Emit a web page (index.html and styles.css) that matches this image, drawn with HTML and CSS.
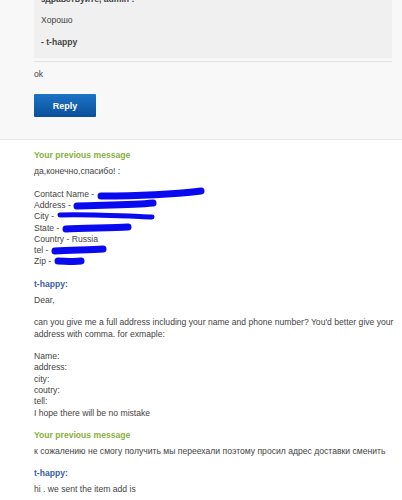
FILE: index.html
```html
<!DOCTYPE html>
<html lang="ru">
<head>
    <meta charset="UTF-8">
    <meta name="viewport" content="width=device-width, initial-scale=1.0">
    <title>Message</title>
    <link rel="stylesheet" href="styles.css">
</head>
<body>
    <section class="reply-area">
        <div class="quote">
            <p class="strong">здравствуйте, admin :</p>
            <p>Хорошо</p>
            <p class="strong">- t-happy</p>
        </div>
        <div class="quote-line"></div>
        <p class="answer">ok</p>
        <button class="reply-btn">Reply</button>
    </section>

    <section class="history">
        <div class="msg">
            <div class="label mine">Your previous message</div>
            <div class="body">
                да,конечно,спасибо! :<br><br>
                Contact Name - <svg class="redact" width="108" height="12" viewBox="0 0 108 12"><path d="M4 8 C30 8 70 7 104 3" /></svg><br>
                Address - <svg class="redact" width="84" height="12" viewBox="0 0 84 12"><path d="M4 7 C30 6 60 6 80 4" /></svg><br>
                City - <svg class="redact thin" width="100" height="12" viewBox="0 0 100 12"><path d="M4 5 C30 4 70 6 96 7" /></svg><br>
                State - <svg class="redact" width="70" height="12" viewBox="0 0 70 12"><path d="M4 7 C20 6 50 6 66 5" /></svg><br>
                Country - Russia<br>
                tel - <svg class="redact" width="56" height="12" viewBox="0 0 56 12"><path d="M4 7 C20 6 40 6 52 5" /></svg><br>
                Zip - <svg class="redact" width="31" height="12" viewBox="0 0 31 12"><path d="M4 6 C10 6 20 7 27 6" /></svg>
            </div>
        </div>

        <div class="msg">
            <div class="label seller">t-happy:</div>
            <div class="body">
                Dear,<br><br>
                can you give me a full address including your name and phone number? You'd better give your address with comma. for exmaple:<br><br>
                Name:<br>
                address:<br>
                city:<br>
                coutry:<br>
                tell:<br>
                I hope there will be no mistake
            </div>
        </div>

        <div class="msg">
            <div class="label mine">Your previous message</div>
            <div class="body">к сожалению не смогу получить мы переехали поэтому просил адрес доставки сменить</div>
        </div>

        <div class="msg">
            <div class="label seller">t-happy:</div>
            <div class="body">hi . we sent the item add is</div>
        </div>
    </section>
</body>
</html>
```

FILE: styles.css
```css
/* General */
body {
    margin: 0;
    font-family: "Liberation Sans", Arial, sans-serif;
    font-size: 8.6px;
    line-height: 11.3px;
    color: #444;
    background-color: #fff;
    overflow: hidden;
}

p {
    margin: 0;
}

.strong {
    font-weight: bold;
}

/* Top reply area */
.reply-area {
    background-color: #f8f8f8;
    padding: 0 10px 22px 34px;
    border-bottom: 1px solid #e6e6e6;
}

.quote {
    margin-top: -13px;
    padding: 6.5px 7px 9px 7px;
    background-color: #f0f0f0;
}

.quote p {
    margin-bottom: 10.7px;
}

.quote p:last-child {
    margin-bottom: 0;
}

.quote-line {
    margin-top: 3px;
    height: 1px;
    background-color: #e2e2e2;
}

.answer {
    margin-top: 7px;
}

.reply-btn {
    display: block;
    margin-top: 14px;
    width: 62px;
    height: 23px;
    padding: 0;
    border: none;
    border-radius: 1px;
    background: linear-gradient(#1c74c6, #0a4f9a);
    color: #fff;
    font-family: inherit;
    font-size: 9px;
    font-weight: bold;
    cursor: pointer;
}

/* Message history */
.history {
    padding: 10px 0 0 34px;
}

.msg {
    margin-bottom: 11px;
}

.label {
    font-weight: bold;
    margin-bottom: 4.7px;
}

.label.mine {
    color: #86b13c;
}

.label.seller {
    color: #3b5ea6;
}

/* marker strokes over private data; negative margins keep line height */
.redact {
    vertical-align: 1px;
    margin: -4px 0;
    overflow: visible;
}

.redact path {
    fill: none;
    stroke: #0a0af0;
    stroke-width: 7;
    stroke-linecap: round;
}

.redact.thin path {
    stroke-width: 5;
}
```
